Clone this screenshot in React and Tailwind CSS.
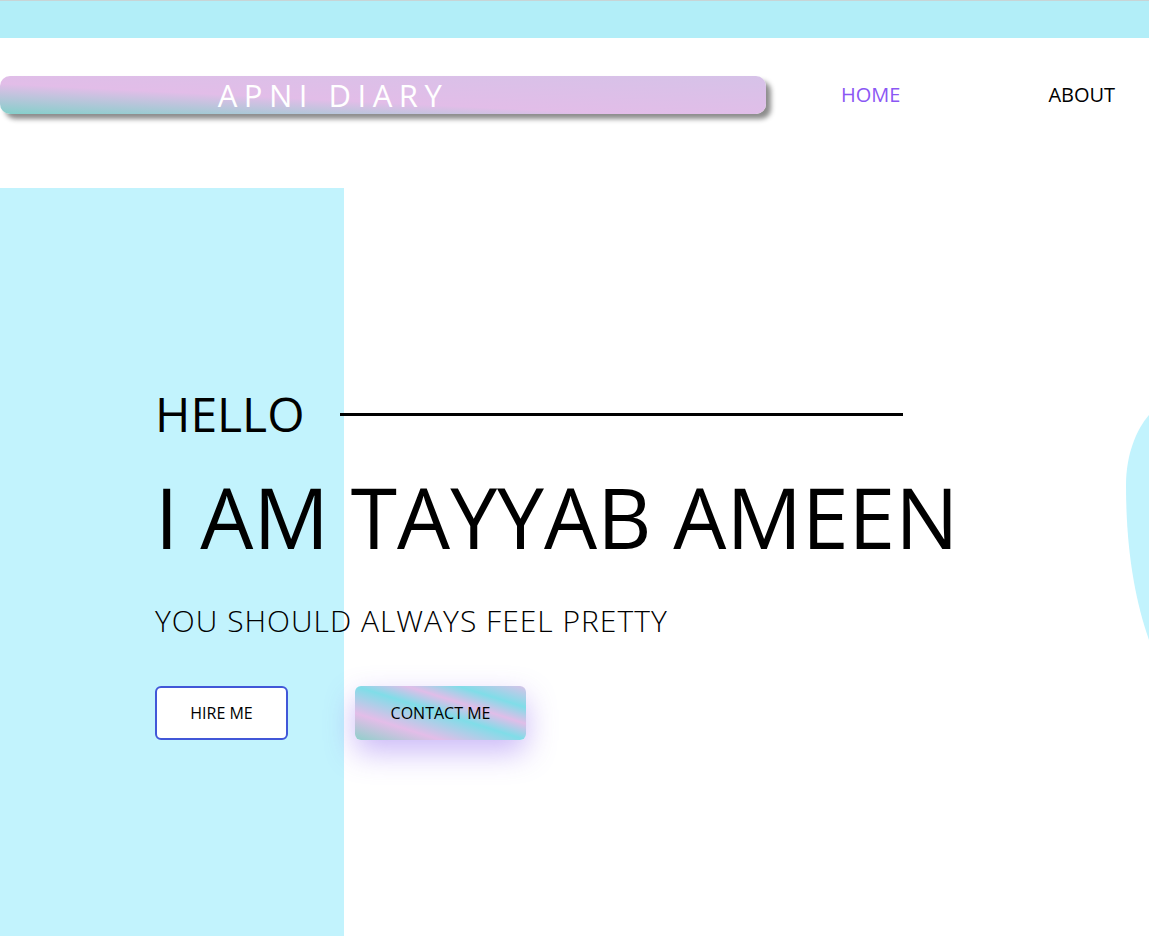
export default function App() {
  const font = { fontFamily: '"Open Sans", "Noto Sans", sans-serif' };
  return (
    <div className="w-[1149px] h-[936px] overflow-hidden bg-white relative" style={font}>
      <div className="h-[38px] bg-[#b2eef8] border-t border-[#c8d4d6]" />
      <header className="flex items-center h-[38px] mt-[38px]">
        <div className="w-[766px] h-[38px] rounded-[10px] bg-[linear-gradient(to_top_right,#84d0ca_0%,#e2bde8_40%,#d6c2e8_100%)] shadow-[5px_5px_5px_rgba(0,0,0,0.45)] flex items-center justify-center pr-[100px]">
          <span className="text-white text-[31px] tracking-[6.5px] leading-none">APNI DIARY</span>
        </div>
        <nav className="flex-1 flex items-center text-[20px] leading-none">
          <a className="text-[#8b57f4] ml-[75px]">HOME</a>
          <a className="text-black ml-[148px]">ABOUT</a>
        </nav>
      </header>
      <section className="mt-[74px] h-[748px] bg-[linear-gradient(to_right,#c2f3fd_344px,#ffffff_344px)] pl-[155px] pt-[202px]">
        <div className="flex items-center">
          <h2 className="text-[48px] leading-none font-normal">HELLO</h2>
          <div className="ml-[35px] w-[563px] h-[3px] bg-black" />
        </div>
        <h1 className="mt-[37px] text-[84px] leading-none font-normal tracking-[0px]">I AM TAYYAB AMEEN</h1>
        <p className="mt-[47px] text-[30px] leading-none font-light tracking-[1px]">YOU SHOULD ALWAYS FEEL PRETTY</p>
        <div className="flex mt-[50px] gap-[67px]">
          <button className="w-[133px] h-[54px] rounded-[6px] border-2 border-[#4157d8] bg-white text-[16px]">HIRE ME</button>
          <button className="w-[171px] h-[54px] rounded-[6px] bg-[linear-gradient(to_top_right,#8fcfca_0%,#e3bde8_25%,#80dde8_50%,#e0bde8_65%,#80dde8_80%,#d8c2e8_100%)] shadow-[0_12px_30px_rgba(140,100,240,0.45)] text-[16px]">CONTACT ME</button>
        </div>
      </section>
      <svg className="absolute left-[1120px] top-[400px]" width="29" height="250" viewBox="0 0 29 250">
        <path d="M29 15 C16 30 6 55 6 85 C6 150 15 200 29 240 Z" fill="#c2f3fd" />
      </svg>
    </div>
  );
}
